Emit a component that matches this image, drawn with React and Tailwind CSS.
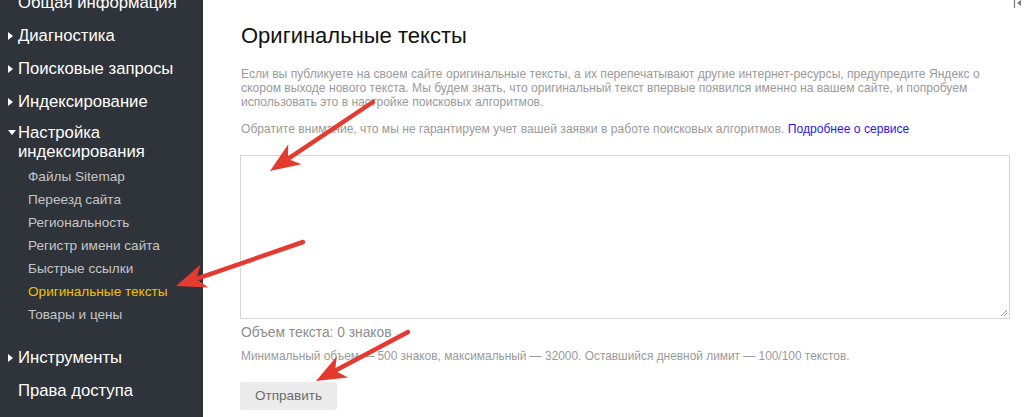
import React from "react";

function Arrow({ x1, y1, x2, y2, head = 30, half = 12, w = 4.5 }) {
  const dx = x2 - x1;
  const dy = y2 - y1;
  const len = Math.hypot(dx, dy);
  const ux = dx / len;
  const uy = dy / len;
  const px = -uy;
  const py = ux;
  const bx = x2 - ux * head;
  const by = y2 - uy * head;
  const nx = x2 - ux * head * 0.72;
  const ny = y2 - uy * head * 0.72;
  const pts = [
    [x2, y2],
    [bx + px * half, by + py * half],
    [nx, ny],
    [bx - px * half, by - py * half],
  ]
    .map((p) => p.join(","))
    .join(" ");
  return (
    <g>
      <line x1={x1} y1={y1} x2={nx} y2={ny} stroke="#e53a30" strokeWidth={w} strokeLinecap="round" />
      <polygon points={pts} fill="#e53a30" />
    </g>
  );
}

const Tri = () => (
  <span className="w-[10px] flex items-center justify-start">
    <svg width="6" height="8" viewBox="0 0 6 8"><polygon points="0,0 5,4 0,8" fill="#ffffff" /></svg>
  </span>
);

function Top({ children, tri = true }) {
  return (
    <div className="h-[33px] flex items-center pl-[8px] text-white text-[16.7px]">
      {tri ? <Tri /> : <span className="w-[10px]" />}
      <span>{children}</span>
    </div>
  );
}

function Sub({ children, active }) {
  return (
    <div className={`h-[23px] flex items-center pl-[28px] text-[13.6px] ${active ? "text-[#f2c200]" : "text-[#c4c6c9]"}`}>
      {children}
    </div>
  );
}

export default function App() {
  return (
    <div
      className="relative w-[1024px] h-[417px] overflow-hidden bg-white flex"
      style={{ fontFamily: '"Liberation Sans", Arial, sans-serif' }}
    >
      <aside className="w-[203px] shrink-0 bg-[#2f333a] flex flex-col">
        <div className="mt-[-14px]">
          <Top tri={false}>Общая информация</Top>
          <Top>Диагностика</Top>
          <Top>Поисковые запросы</Top>
          <Top>Индексирование</Top>
          <div className="pt-[5px] flex pl-[8px] text-white text-[16.7px] leading-[19px]">
            <span className="w-[10px] pt-[7px] flex items-start">
              <svg width="8" height="6" viewBox="0 0 8 6"><polygon points="0,0 8,0 4,5" fill="#ffffff" /></svg>
            </span>
            <span>Настройка<br />индексирования</span>
          </div>
          <div className="mt-[5px]">
            <Sub>Файлы Sitemap</Sub>
            <Sub>Переезд сайта</Sub>
            <Sub>Региональность</Sub>
            <Sub>Регистр имени сайта</Sub>
            <Sub>Быстрые ссылки</Sub>
            <Sub active>Оригинальные тексты</Sub>
            <Sub>Товары и цены</Sub>
          </div>
          <div className="mt-[14px]">
            <Top>Инструменты</Top>
            <Top tri={false}>Права доступа</Top>
          </div>
        </div>
      </aside>

      <main className="flex-1 pl-[37px] pt-[22px] flex flex-col items-start">
        <h1 className="text-[22px] leading-[28px] text-[#111] pl-[1px]">Оригинальные тексты</h1>
        <p className="mt-[17px] w-[772px] pl-[1px] text-[12.1px] leading-[14px] text-[#9a9a9a]">
          Если вы публикуете на своем сайте оригинальные тексты, а их перепечатывают другие интернет-ресурсы, предупредите Яндекс о скором выходе нового текста. Мы будем знать, что оригинальный текст впервые появился именно на вашем сайте, и попробуем использовать это в настройке поисковых алгоритмов.
        </p>
        <p className="mt-[13px] pl-[1px] text-[12.1px] leading-[14px] text-[#9a9a9a]">
          Обратите внимание, что мы не гарантируем учет вашей заявки в работе поисковых алгоритмов.{" "}
          <span className="text-[#2b17e6]">Подробнее о сервисе</span>
        </p>
        <div className="mt-[19px] w-[770px] h-[164px] border border-[#d6d6d6] relative">
          <svg className="absolute right-[1px] bottom-[1px]" width="9" height="9" viewBox="0 0 9 9">
            <line x1="8" y1="2" x2="2" y2="8" stroke="#9a9a9a" strokeWidth="1" />
            <line x1="8" y1="5" x2="5" y2="8" stroke="#9a9a9a" strokeWidth="1" />
          </svg>
        </div>
        <div className="mt-[6px] pl-[1px] text-[13.8px] leading-[16px] text-[#8c8c8c]">Объем текста: 0 знаков</div>
        <div className="mt-[8px] pl-[1px] text-[11.9px] leading-[14px] text-[#9a9a9a]">
          Минимальный объем — 500 знаков, максимальный — 32000. Оставшийся дневной лимит — 100/100 текстов.
        </div>
        <button className="mt-[19px] w-[97px] h-[28px] rounded-[3px] bg-[#ebebeb] text-[13.5px] text-[#6b6b6b]">
          Отправить
        </button>
      </main>

      <svg className="absolute right-0 top-0" width="12" height="9" viewBox="0 0 12 9">
        <line x1="2.5" y1="0" x2="2.5" y2="8" stroke="#7a7a7a" strokeWidth="1.2" />
        <polygon points="5,3 9,0 9,6" fill="#7a7a7a" />
      </svg>

      <svg className="absolute left-0 top-0 pointer-events-none" width="1024" height="417" viewBox="0 0 1024 417">
        <Arrow x1={373} y1={102} x2={270} y2={171} />
        <Arrow x1={303} y1={242} x2={176} y2={286} />
        <Arrow x1={408} y1={332} x2={316} y2={381} />
      </svg>
    </div>
  );
}
